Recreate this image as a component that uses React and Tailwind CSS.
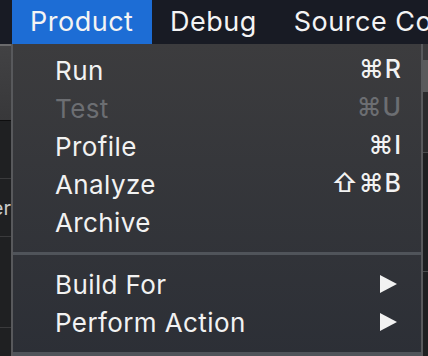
import React from "react";

const font = { fontFamily: 'Inter, "DejaVu Sans", sans-serif' };

function Item({ label, shortcut, disabled, arrow }) {
  return (
    <div className={`flex h-[38px] items-center justify-between pl-[42px] pr-[19px] text-[26px] ${disabled ? "text-[#6c6e72]" : "text-[#f2f2f2]"}`}>
      <span className="tracking-[0.4px]">{label}</span>
      {shortcut && <span className="tracking-[1px] text-[25px] font-medium">{shortcut}</span>}
      {arrow && (
        <svg width="17" height="18" viewBox="0 0 17 18" className="mr-[5px]">
          <polygon points="0,0 17,9 0,18" fill="#f2f2f2" />
        </svg>
      )}
    </div>
  );
}

export default function App() {
  return (
    <div className="w-[428px] h-[356px] overflow-hidden bg-[#1f2022] flex flex-col" style={font}>
      <div className="h-[44px] bg-[#181b24] flex items-center text-[27px] tracking-[0.5px] text-[#f4f4f4] shrink-0">
        <div className="w-[12px] shrink-0" />
        <div className="h-full w-[140px] shrink-0 bg-[#1d6dd5] flex items-center pl-[18px]">Product</div>
        <div className="pl-[18px] shrink-0">Debug</div>
        <div className="pl-[37px] whitespace-nowrap shrink-0">Source Co</div>
      </div>
      <div className="flex flex-1">
        <div className="w-[11px] flex flex-col shrink-0">
          <div className="h-[2px] bg-[#6a6a6c]" />
          <div className="h-[74px] bg-gradient-to-b from-[#424244] to-[#38383a]" />
          <div className="h-[1px] bg-[#0e0e0f]" />
          <div className="h-[58px] border-b border-[#3a3a3c]" />
          <div className="h-[58px] border-b border-[#3a3a3c] flex items-center justify-end overflow-hidden">
            <span className="text-[20px] text-[#c9c9c9] leading-none">er</span>
          </div>
          <div className="h-[91px] border-b border-[#3a3a3c]" />
        </div>
        <div className="flex-1 border-l-[2px] border-r-[2px] border-[#58595c] bg-gradient-to-b from-[#3c3c3e] to-[#2c2f36] flex flex-col pt-[7px]">
          <Item label="Run" shortcut="⌘R" />
          <Item label="Test" shortcut="⌘U" disabled />
          <Item label="Profile" shortcut="⌘I" />
          <Item label="Analyze" shortcut="⇧⌘B" />
          <Item label="Archive" />
          <div className="h-[3px] bg-[#50545a] mt-[11px] mb-[10px]" />
          <Item label="Build For" arrow />
          <Item label="Perform Action" arrow />
          <div className="h-[4px] bg-[#50545a] mt-[11px]" />
        </div>
        <div className="w-[5px] flex flex-col shrink-0">
          <div className="h-[16px] bg-[#3a3a3c]" />
          <div className="h-[32px] bg-[#5a5a5c]" />
          <div className="h-[60px] bg-[#2a2a2c]" />
          <div className="h-[1px] bg-[#4a4a4c]" />
          <div className="h-[118px] bg-[#1e1f21]" />
          <div className="h-[1px] bg-[#4a4a4c]" />
          <div className="flex-1 bg-[#1e1f21]" />
        </div>
      </div>
    </div>
  );
}
